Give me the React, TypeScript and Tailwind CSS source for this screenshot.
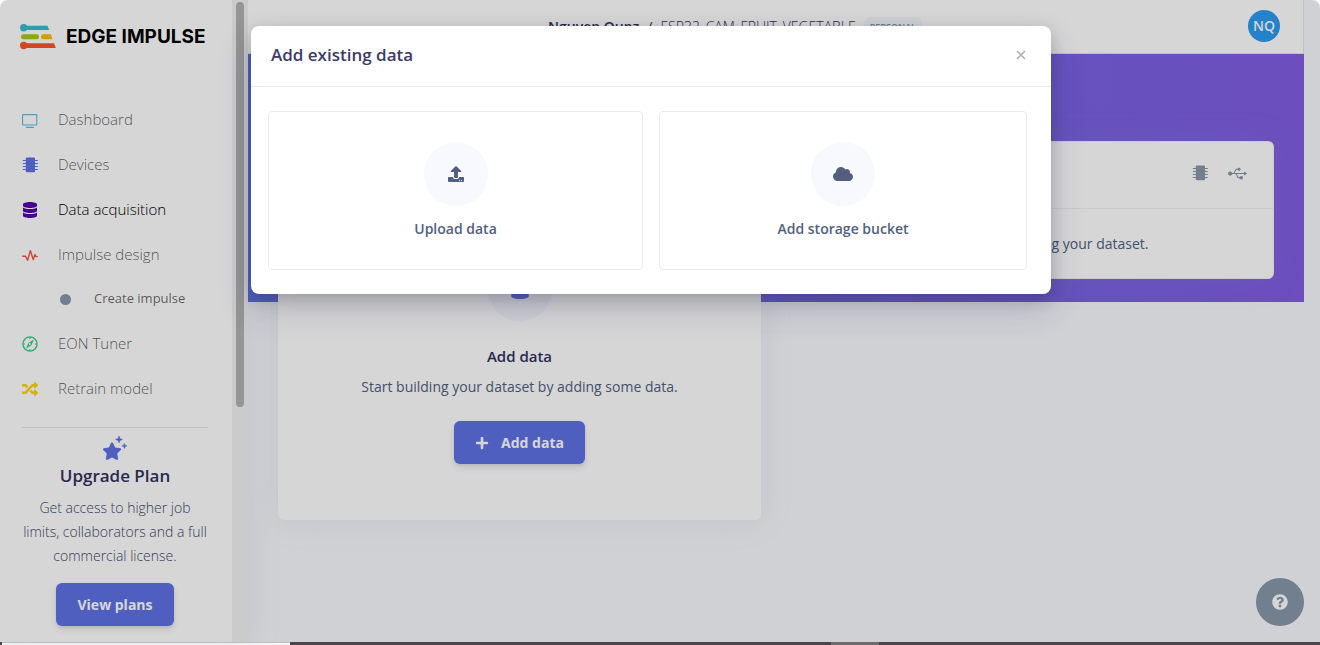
import React from "react";
import { FaCloud, FaDatabase, FaPlus, FaQuestionCircle, FaRandom, FaUpload, FaUsb } from "react-icons/fa";

function TvIcon() {
  return (
    <svg viewBox="0 0 16 16" className="h-4 w-4" fill="none" stroke="currentColor">
      <rect x="0.6" y="2.6" width="14.200" height="10.400" rx="0.6" strokeWidth="1.1" />
      <path d="M4.5 15.300h7" strokeWidth="1.2" strokeLinecap="round" />
    </svg>
  );
}

function ChipIcon() {
  return (
    <svg viewBox="0 0 16 16" className="h-4 w-4" fill="currentColor">
      <rect x="3.8" y="0.5" width="9.2" height="14.800" rx="1" />
      <path d="M0.800 3.500h15M0.800 6.500h15M0.800 9.500h15M0.800 12.500h15" stroke="currentColor" strokeWidth="1" />
    </svg>
  );
}

function PulseIcon() {
  return (
    <svg viewBox="0 0 16 16" className="h-4 w-4" fill="none" stroke="currentColor" strokeWidth="1.4" strokeLinejoin="round" strokeLinecap="round">
      <path d="M0.8 9.2h2.6l2.2 4L8.4 3.6l2.8 9 1.8-5.2.9 2.2h1.4" />
    </svg>
  );
}

function CompassIcon() {
  return (
    <svg viewBox="0 0 16 16" className="h-4 w-4" fill="none" stroke="currentColor">
      <circle cx="8" cy="8" r="7.1" strokeWidth="1.3" />
      <path d="M8 1v2M8 13v2M1 8h2M13 8h2" strokeWidth="1.1" />
      <path fillRule="evenodd" d="M12 3.6 9.4 9.2 4 12.4l2.6-5.7zM8.5 7.2a1 1 0 1 0-.9 1.7 1 1 0 0 0 .9-1.7z" fill="currentColor" stroke="none" />
    </svg>
  );
}

function StarsIcon() {
  return (
    <svg viewBox="0 0 24 24" className="h-6 w-6 text-[#5e72e4]" fill="currentColor">
      <path d="M9 6.3c.5 0 .8.2 1 .7l2.2 4.5 5 .8c1 .2 1.3 1.1.6 1.8L14.200 17.600l.9 5c.1 1-.7 1.600-1.600 1.200L9 21.500l-4.500 2.300c-.9.4-1.700-.2-1.600-1.200l.9-5-3.600-3.500c-.7-.7-.4-1.600.6-1.800l5-.8L8 7c.2-.5.5-.7 1-.7z" />
      <path d="M16 0l1 2.500 2.500 1-2.500 1L16 7l-1-2.500-2.500-1 2.500-1z" stroke="currentColor" strokeWidth="0.500" />
      <path d="M21.400 7.400l.7 1.800 1.800.7-1.800.7-.7 1.800-.7-1.800-1.800-.7 1.800-.7z" stroke="currentColor" strokeWidth="0.500" />
    </svg>
  );
}

function Logo() {
  return (
    <a href="#" className="flex items-center gap-[10px]" aria-label="Edge Impulse">
      <svg viewBox="0 0 36 26" className="h-[26px] w-9 shrink-0">
        <circle cx="3.700" cy="3.800" r="3.700" fill="#39bccb" />
        <path d="M4 1.700h23.500l1.700 4.300H4z" fill="#39bccb" />
        <rect x="1" y="10.200" width="18" height="5" rx="2.500" fill="#a2cc0b" />
        <path d="M23.500 10.200h7.200l1.900 5h-9.100a2.500 2.500 0 0 1 0-5z" fill="#ffba08" />
        <circle cx="3.700" cy="21.500" r="3.700" fill="#f9552b" />
        <path d="M4 19.200h30l1.800 4.700H4z" fill="#f9552b" />
      </svg>
      <span className="whitespace-nowrap font-['Inter',sans-serif] text-[19px] leading-6 font-bold text-black">EDGE IMPULSE</span>
    </a>
  );
}

type NavItem = { label: string; icon: React.ReactNode; tone: string; active?: boolean; nested?: boolean };

const navItems: NavItem[] = [
  { label: "Dashboard", icon: <TvIcon />, tone: "text-[#5bc0de]" },
  { label: "Devices", icon: <ChipIcon />, tone: "text-[#5e72e4]" },
  { label: "Data acquisition", icon: <FaDatabase className="h-4 w-4" />, tone: "text-[#5603ad]", active: true },
  { label: "Impulse design", icon: <PulseIcon />, tone: "text-[#f5553d]" },
  { label: "Create impulse", icon: <span className="block h-[11px] w-[11px] rounded-full bg-[#8898aa]" />, tone: "", nested: true },
  { label: "EON Tuner", icon: <CompassIcon />, tone: "text-[#2dce89]" },
  { label: "Retrain model", icon: <FaRandom className="h-4 w-4" />, tone: "text-[#ffd600]" },
];

function Sidebar() {
  return (
    <aside className="flex w-[248px] shrink-0 bg-white shadow-[0_0_32px_rgba(136,152,170,0.15)]">
      <div className="flex min-w-0 flex-1 flex-col pt-6">
        <div className="pl-5">
          <Logo />
        </div>
        <nav className="mt-[47px]">
          <ul>
            {navItems.map((item) => (
              <li key={item.label}>
                <a
                  href="#"
                  className={
                    item.nested
                      ? "flex h-11 items-center gap-[23px] pl-[60px] text-[13px] text-black/60"
                      : item.active
                        ? "flex h-[45px] items-center gap-5 pl-[22px] text-[15px] font-light text-black"
                        : "flex h-[45px] items-center gap-5 pl-[22px] text-[15px] font-light text-black/65"
                  }
                >
                  <span className={item.tone}>{item.icon}</span>
                  {item.label}
                </a>
              </li>
            ))}
          </ul>
        </nav>
        <section className="mr-6 ml-[22px] mt-4 flex flex-col items-center border-t border-black/10 pt-2 text-center">
          <StarsIcon />
          <h2 className="mt-1 text-[17px] leading-6 font-semibold text-[#32325d]">Upgrade Plan</h2>
          <p className="mt-2 text-sm leading-6 font-light whitespace-nowrap text-[#3f4a68]">
            Get access to higher job
            <br />
            limits, collaborators and a full
            <br />
            commercial license.
          </p>
          <button type="button" className="mt-[15px] h-[43px] rounded-md bg-[#5e72e4] px-[21px] text-sm font-bold text-white shadow-[0_4px_6px_rgba(50,50,93,0.11),0_1px_3px_rgba(0,0,0,0.08)]">
            View plans
          </button>
        </section>
      </div>
      <div className="flex w-4 justify-center bg-[#f2f2f2] pt-0.5">
        <div className="h-[405px] w-2 rounded-full bg-[#b2b2b2]" />
      </div>
    </aside>
  );
}

function TopBar() {
  return (
    <header className="flex h-[54px] shrink-0 items-center justify-between border-r border-b border-black/10 bg-white pr-[23px] pb-0.5">
      <div className="flex flex-1 items-center justify-center gap-2 pt-0.5 pr-[26px] text-[14px] text-[#32325d]">
        <span className="font-semibold">Nguyen Qunz</span>
        <span>/</span>
        <span className="font-light">ESP32_CAM_FRUIT_VEGETABLE</span>
        <span className="rounded-md bg-[#f5f9fc] px-[6px] py-1 text-[9px] leading-3 font-semibold text-[#7798b4]">PERSONAL</span>
      </div>
      <button type="button" className="h-8 w-8 rounded-full bg-[#2b9bef] text-sm font-semibold text-white">NQ</button>
    </header>
  );
}

function Cards() {
  return (
    <div className="grid grid-cols-2 items-start gap-[30px] px-[30px] pt-[87px]">
      <section className="flex h-[379px] flex-col items-center rounded-md bg-white pt-[116px] shadow-[0_0_32px_rgba(136,152,170,0.15)]">
        <div className="flex h-16 w-16 items-center justify-center rounded-full bg-[#f6f6fe] text-[#5e72e4]">
          <FaDatabase className="h-5 w-5" />
        </div>
        <h3 className="mt-[23px] text-[15px] leading-6 font-semibold text-[#32325d]">Add data</h3>
        <p className="mt-[7px] text-sm leading-6 text-[#525f7f]">Start building your dataset by adding some data.</p>
        <button type="button" className="mt-[22px] flex h-[43px] items-center gap-3 rounded-md bg-[#5e72e4] px-[21px] text-sm font-bold text-white shadow-[0_4px_6px_rgba(50,50,93,0.11),0_1px_3px_rgba(0,0,0,0.08)]">
          <FaPlus className="h-[14px] w-[14px]" />
          Add data
        </button>
      </section>
      <section className="rounded-md border border-black/5 bg-white shadow-[0_0_32px_rgba(136,152,170,0.15)]">
        <div className="flex h-[67px] items-center justify-between border-b border-black/5 px-[26px] pb-1">
          <h3 className="text-base font-semibold text-[#32325d]">Collect data</h3>
          <div className="flex items-center gap-5 text-[#8898aa]">
            <ChipIcon />
            <FaUsb className="h-[19px] w-[19px]" />
          </div>
        </div>
        <p className="pt-[23px] pr-[30px] pb-[22px] pl-6 text-center text-sm leading-6 text-[#525f7f]">Get started by building your dataset.</p>
      </section>
    </div>
  );
}

function Choice({ icon, label }: { icon: React.ReactNode; label: string }) {
  return (
    <button type="button" className="flex h-[159px] flex-col items-center rounded border border-[#e9ecef] pt-[30px] text-[#525f7f]">
      <span className="flex h-16 w-16 items-center justify-center rounded-full bg-[#f8f9fe]">{icon}</span>
      <span className="mt-[11px] text-sm leading-6 font-semibold">{label}</span>
    </button>
  );
}

function AddDataDialog() {
  return (
    <div className="absolute inset-0 flex items-start justify-center rounded-t-lg bg-black/16 pt-[26px] pr-[18px]">
      <div role="dialog" aria-label="Add existing data" className="w-full max-w-[800px] rounded-lg bg-white shadow-[0_15px_35px_rgba(50,50,93,0.2),0_5px_15px_rgba(0,0,0,0.17)]">
        <div className="flex h-[61px] items-center justify-between border-b border-[#e9ecef] px-5 pb-[3px]">
          <h2 className="text-[17px] leading-6 font-semibold text-[#3c3b66]">Add existing data</h2>
          <button type="button" aria-label="Close" className="flex h-5 w-5 items-center justify-center text-[#b0b0b0]">
            <svg viewBox="0 0 10 10" className="h-[10px] w-[10px]" stroke="currentColor" strokeWidth="1.700">
              <path d="M1 1l8 8M9 1L1 9" />
            </svg>
          </button>
        </div>
        <div className="grid grid-cols-[375fr_368fr] gap-4 pt-6 pr-6 pb-6 pl-[17px]">
          <Choice icon={<FaUpload className="h-4 w-4" />} label="Upload data" />
          <Choice icon={<FaCloud className="h-5 w-5" />} label="Add storage bucket" />
        </div>
      </div>
    </div>
  );
}

export default function App() {
  return (
    <div className="flex h-screen flex-col overflow-hidden font-['Open_Sans',sans-serif]">
      <div className="relative flex min-h-0 flex-1 bg-[#f8f9fe]">
        <Sidebar />
        <main className="min-w-0 flex-1 pr-4">
          <TopBar />
          <div className="h-[248px] bg-linear-[87deg,#5e72e4,#825ee4]">
            <Cards />
          </div>
        </main>
        <button type="button" aria-label="Help" className="absolute right-4 bottom-4 flex h-12 w-12 items-center justify-center rounded-full bg-[#8898aa] text-white">
          <FaQuestionCircle className="h-4 w-4" />
        </button>
        <AddDataDialog />
      </div>
      <div className="flex h-[3px] shrink-0 bg-[#4a4548]">
        <div className="ml-0.5 w-72 border-t border-[#c0c0c0] bg-[#f5f5f5]" />
        <div className="ml-[541px] w-12 bg-[#6e6b6d]" />
      </div>
    </div>
  );
}
